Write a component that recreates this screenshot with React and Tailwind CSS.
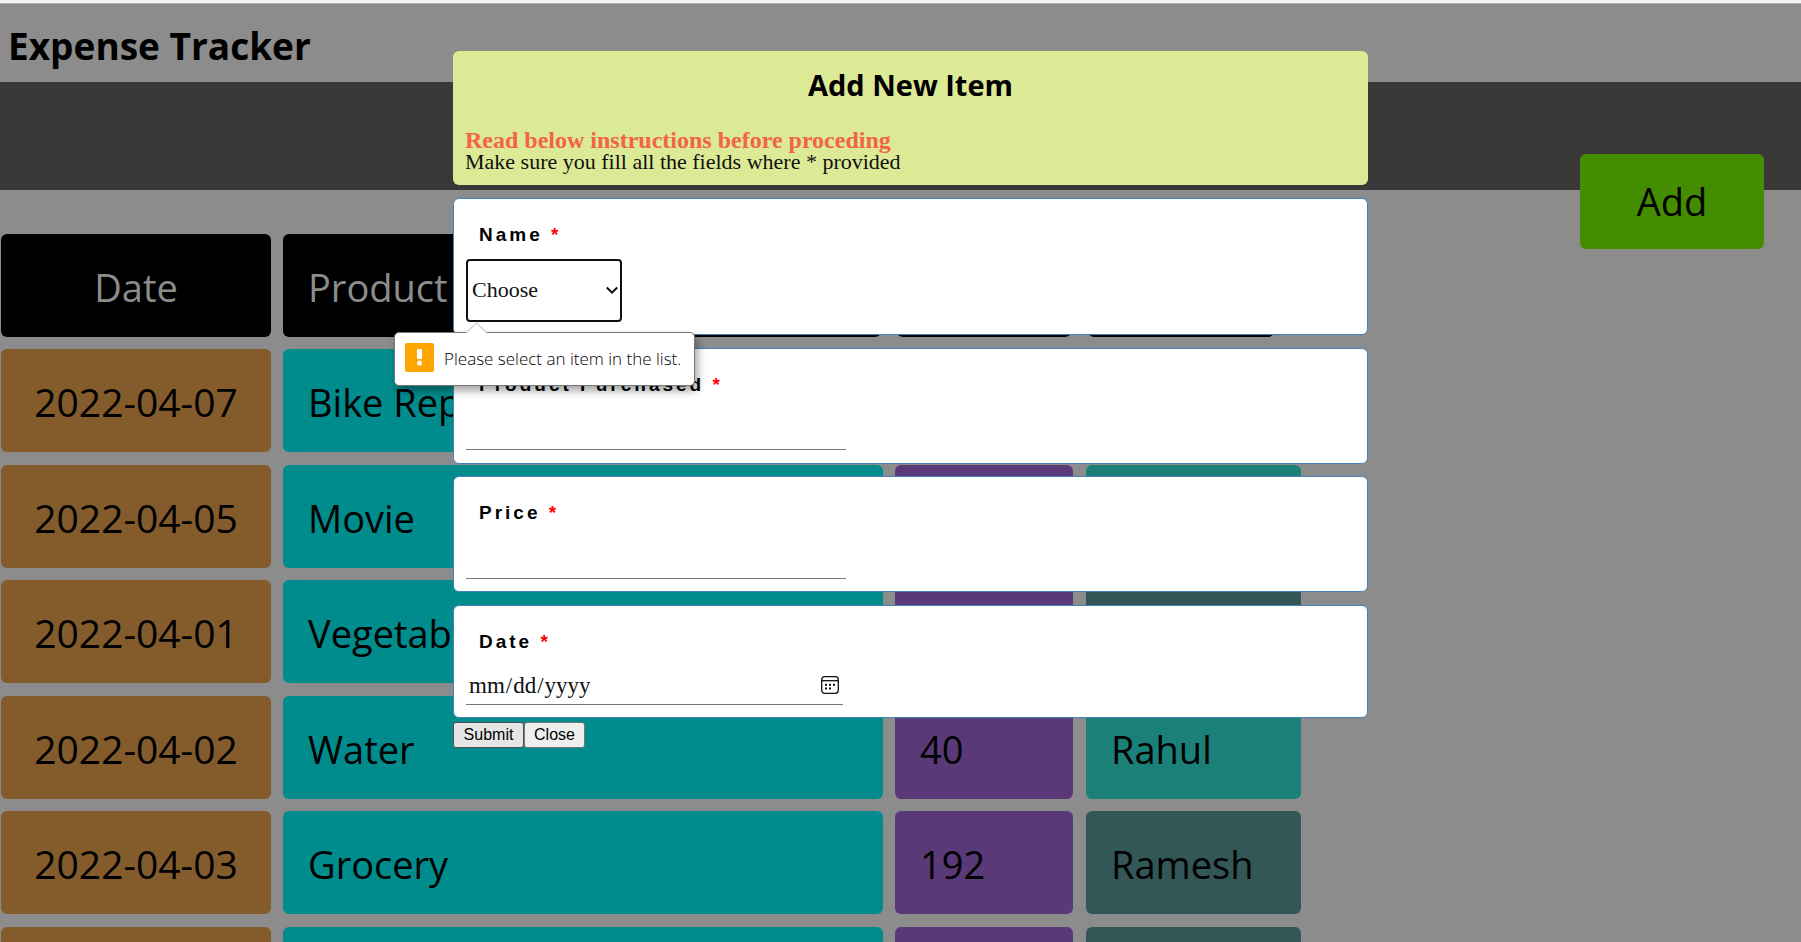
const SANS = "font-['Open_Sans','Noto_Sans',sans-serif]";

const items = [
  { id: 1, date: '2022-04-07', product: 'Bike Repair', price: '500', name: 'Rahul' },
  { id: 2, date: '2022-04-05', product: 'Movie', price: '300', name: 'Rahul' },
  { id: 3, date: '2022-04-01', product: 'Vegetables', price: '120', name: 'Ramesh' },
  { id: 4, date: '2022-04-02', product: 'Water', price: '40', name: 'Rahul' },
  { id: 5, date: '2022-04-03', product: 'Grocery', price: '192', name: 'Ramesh' },
  { id: 6, date: '', product: '', price: '', name: '' },
];

const headings = [
  { label: 'Date', align: 'justify-center', cell: 'pr-3' },
  { label: 'Product', align: 'pl-[25px]', cell: 'pr-[14px]' },
  { label: 'Price', align: 'pl-[25px]', cell: 'pl-[2px] pr-[15px]' },
  { label: 'Name', align: 'pl-[25px]', cell: 'pl-[2px] pr-[27px]' },
];

function Tile({ className, children }) {
  return (
    <div className={`flex h-[103px] items-center rounded-[6px] pt-[3px] ${className}`}>{children}</div>
  );
}

function ExpenseTable() {
  return (
    <table className="ml-px mt-11 w-[1300px] table-fixed border-collapse text-[38px] leading-[54px] text-black">
      <colgroup>
        <col className="w-[282px]" />
        <col className="w-[612px]" />
        <col className="w-[191px]" />
        <col className="w-[215px]" />
      </colgroup>
      <thead>
        <tr className="h-[115px] align-top">
          {headings.map((h) => (
            <th key={h.label} scope="col" className={`py-0 font-normal ${h.cell}`}>
              <Tile className={`bg-black text-[#8c8c8c] ${h.align}`}>{h.label}</Tile>
            </th>
          ))}
        </tr>
      </thead>
      <tbody>
        {items.map((item) => (
          <tr key={item.id} className="align-top odd:h-[116px] even:h-[115px]">
            <td className="p-0 pr-3">
              <Tile className="justify-center bg-[#845b2a] text-[39px]">{item.date}</Tile>
            </td>
            <td className="p-0 pr-3">
              <Tile className="bg-[#008c8c] pl-[25px]">{item.product}</Tile>
            </td>
            <td className="p-0 pr-[13px]">
              <Tile className="bg-[#5a3978] pl-[25px]">{item.price}</Tile>
            </td>
            <td className="p-0">
              <Tile className={`pl-[25px] ${item.name === 'Rahul' ? 'bg-[#1a8078]' : 'bg-[#335757]'}`}>
                {item.name}
              </Tile>
            </td>
          </tr>
        ))}
      </tbody>
    </table>
  );
}

function FieldCard({ id, label, className, children }) {
  return (
    <div className={`rounded-[6px] border border-[#4682b4] bg-white px-3 ${className}`}>
      <label
        htmlFor={id}
        className="block pl-[13px] pt-6 font-['Liberation_Sans',Arial,sans-serif] text-[19px] font-bold leading-6 tracking-[3px] text-black"
      >
        {label} <span className="text-[#ff0000]">*</span>
      </label>
      {children}
    </div>
  );
}

function CalendarIcon() {
  return (
    <svg
      className="pointer-events-none absolute right-[4px] top-[8px] size-[18px]"
      viewBox="0 0 18 18"
      fill="none"
      stroke="#101010"
      strokeWidth="1.3"
      aria-hidden="true"
    >
      <rect x="0.7" y="0.7" width="16.6" height="16.6" rx="3" />
      <path d="M0.7 4.7h16.6" />
      <g fill="#101010" stroke="none">
        <rect x="4" y="7.8" width="2" height="2" />
        <rect x="8" y="7.8" width="2" height="2" />
        <rect x="12" y="7.8" width="2" height="2" />
        <rect x="4" y="11.5" width="2" height="2" />
        <rect x="8" y="11.5" width="2" height="2" />
      </g>
    </svg>
  );
}

function ValidationTip() {
  return (
    <div
      role="alert"
      className={`absolute -left-[72px] top-[73px] z-10 flex h-[54px] w-[301px] items-center rounded-[5px] border border-[#767676] bg-white pl-[10px] shadow-[3px_5px_8px_rgba(0,0,0,0.35)] ${SANS}`}
    >
      <svg className="absolute -top-[11px] left-[71px] h-[12px] w-[21px]" viewBox="0 0 21 12" aria-hidden="true">
        <path d="M0 12V11L10.500 0.800L21 11V12Z" fill="#fff" />
        <path d="M0.300 11L10.500 0.800L20.700 11" fill="none" stroke="#b0b0b0" />
      </svg>
      <svg className="mb-1 size-[29px]" viewBox="0 0 29 29" aria-hidden="true">
        <rect width="29" height="29" rx="2" fill="#ffa500" />
        <rect x="12" y="6" width="5" height="10" fill="#fff" />
        <circle cx="14.500" cy="20" r="2.500" fill="#fff" />
      </svg>
      <span className="pl-[10px] text-[17px] font-light leading-6 whitespace-nowrap text-black">
        Please select an item in the list.
      </span>
    </div>
  );
}

function AddItemDialog() {
  const line = 'block border-0 border-b border-[#767676] bg-transparent outline-none';
  return (
    <form
      role="dialog"
      aria-labelledby="dialog-title"
      className="w-[915px] font-['Liberation_Serif',Georgia,serif] text-[22px] leading-[22px] text-[#101010]"
    >
      <header className="h-[134px] rounded-[6px] bg-[#dce995] px-3 pt-[14px]">
        <h2 id="dialog-title" className={`text-center text-[29px] font-bold leading-10 text-black ${SANS}`}>
          Add New Item
        </h2>
        <p className="pt-6 text-[24px] font-bold leading-[22px] text-[#f36346]">
          Read below instructions before proceding
        </p>
        <p>Make sure you fill all the fields where * provided</p>
      </header>

      <FieldCard id="name" label="Name" className="mt-[13px] h-[137px]">
        <div className="relative mt-3 w-[156px]">
          <select
            id="name"
            required
            defaultValue=""
            className="block h-[63px] w-full appearance-none rounded-[4px] border-2 border-[#101010] bg-white pb-[2px] pl-1 outline-none"
          >
            <option value="">Choose</option>
            <option>Rahul</option>
            <option>Ramesh</option>
          </select>
          <svg
            className="pointer-events-none absolute right-[4px] top-[27px] h-[9px] w-[12px]"
            viewBox="0 0 12 9"
            fill="none"
            stroke="#101010"
            strokeWidth="2"
            aria-hidden="true"
          >
            <path d="M0.800 1.500L6 6.700L11.200 1.500" />
          </svg>
          <ValidationTip />
        </div>
      </FieldCard>

      <FieldCard id="product" label="Product Purchased" className="mt-[13px] h-[116px]">
        <input id="product" type="text" required className={`mt-3 h-[41px] w-[380px] ${line}`} />
      </FieldCard>

      <FieldCard id="price" label="Price" className="mt-3 h-[116px]">
        <input id="price" type="text" inputMode="numeric" required className={`mt-3 h-[42px] w-[380px] ${line}`} />
      </FieldCard>

      <FieldCard id="date" label="Date" className="mt-[13px] h-[113px]">
        <div className="relative mt-[14px] w-[377px]">
          <input
            id="date"
            type="date"
            required
            className={`h-[37px] w-full pl-[2px] text-[23px] leading-8 [&::-webkit-calendar-picker-indicator]:opacity-0 ${line}`}
          />
          <CalendarIcon />
        </div>
      </FieldCard>

      <div className="mt-1 flex font-['Liberation_Sans',Arial,sans-serif] text-[16px] leading-5 text-black">
        <button type="submit" className="h-[26px] w-[71px] rounded-[3px] border border-[#4f4f4f] bg-[#e5e5e5]">
          Submit
        </button>
        <button type="button" className="h-[26px] w-[61px] rounded-[3px] border border-[#767676] bg-[#efefef]">
          Close
        </button>
      </div>
    </form>
  );
}

export default function App() {
  return (
    <div className={`relative h-screen overflow-hidden border-t-[3px] border-[#f3f3f3] bg-[#8c8c8c] ${SANS}`}>
      <header className="border-t border-[#b5b5b5] pb-[7px] pl-2 pt-3">
        <h1 className="text-[37px] font-bold leading-[59px] text-black">Expense Tracker</h1>
      </header>
      <div className="flex h-[108px] justify-end bg-[#383838] pr-[37px] pt-[72px]">
        <button
          type="button"
          className="h-[95px] w-[184px] shrink-0 rounded-[6px] bg-[#448c00] pb-[2px] text-[38px] leading-[54px] text-black"
        >
          Add
        </button>
      </div>
      <ExpenseTable />
      <div className="absolute inset-0 flex items-start justify-center pl-5 pt-12">
        <AddItemDialog />
      </div>
    </div>
  );
}
